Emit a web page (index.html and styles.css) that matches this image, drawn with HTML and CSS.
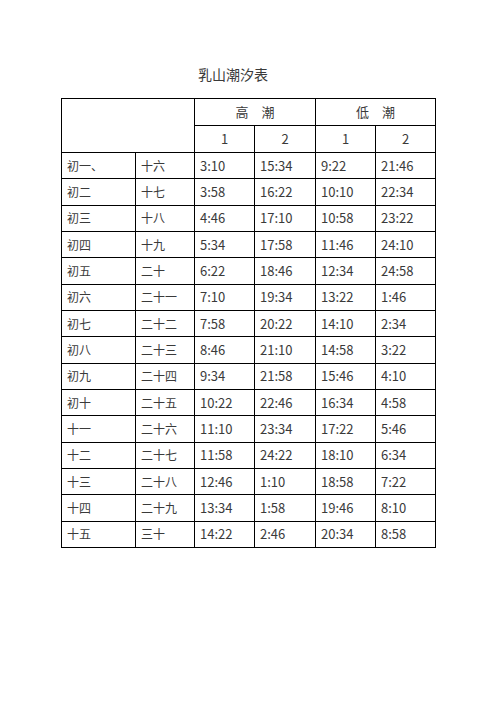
FILE: index.html
```html
<!DOCTYPE html>
<html lang="zh">
<head>
<meta charset="utf-8">
<title>乳山潮汐表</title>
<link rel="stylesheet" href="styles.css">
</head>
<body>
<div class="page">
  <h1 class="title">乳山潮汐表</h1>
  <table class="tide">
    <colgroup>
      <col class="c1"><col class="c2"><col class="c3"><col class="c4"><col class="c5"><col class="c6">
    </colgroup>
    <thead>
      <tr class="hrow">
        <th colspan="2" rowspan="2"></th>
        <th colspan="2">高　潮</th>
        <th colspan="2">低　潮</th>
      </tr>
      <tr class="hrow">
        <th>1</th><th>2</th><th>1</th><th>2</th>
      </tr>
    </thead>
    <tbody>
      <tr><td class="cn">初一、</td><td class="cn">十六</td><td>3:10</td><td>15:34</td><td>9:22</td><td>21:46</td></tr>
      <tr><td class="cn">初二</td><td class="cn">十七</td><td>3:58</td><td>16:22</td><td>10:10</td><td>22:34</td></tr>
      <tr><td class="cn">初三</td><td class="cn">十八</td><td>4:46</td><td>17:10</td><td>10:58</td><td>23:22</td></tr>
      <tr><td class="cn">初四</td><td class="cn">十九</td><td>5:34</td><td>17:58</td><td>11:46</td><td>24:10</td></tr>
      <tr><td class="cn">初五</td><td class="cn">二十</td><td>6:22</td><td>18:46</td><td>12:34</td><td>24:58</td></tr>
      <tr><td class="cn">初六</td><td class="cn">二十一</td><td>7:10</td><td>19:34</td><td>13:22</td><td>1:46</td></tr>
      <tr><td class="cn">初七</td><td class="cn">二十二</td><td>7:58</td><td>20:22</td><td>14:10</td><td>2:34</td></tr>
      <tr><td class="cn">初八</td><td class="cn">二十三</td><td>8:46</td><td>21:10</td><td>14:58</td><td>3:22</td></tr>
      <tr><td class="cn">初九</td><td class="cn">二十四</td><td>9:34</td><td>21:58</td><td>15:46</td><td>4:10</td></tr>
      <tr><td class="cn">初十</td><td class="cn">二十五</td><td>10:22</td><td>22:46</td><td>16:34</td><td>4:58</td></tr>
      <tr><td class="cn">十一</td><td class="cn">二十六</td><td>11:10</td><td>23:34</td><td>17:22</td><td>5:46</td></tr>
      <tr><td class="cn">十二</td><td class="cn">二十七</td><td>11:58</td><td>24:22</td><td>18:10</td><td>6:34</td></tr>
      <tr><td class="cn">十三</td><td class="cn">二十八</td><td>12:46</td><td>1:10</td><td>18:58</td><td>7:22</td></tr>
      <tr><td class="cn">十四</td><td class="cn">二十九</td><td>13:34</td><td>1:58</td><td>19:46</td><td>8:10</td></tr>
      <tr><td class="cn">十五</td><td class="cn">三十</td><td>14:22</td><td>2:46</td><td>20:34</td><td>8:58</td></tr>
    </tbody>
  </table>
</div>
</body>
</html>
```

FILE: styles.css
```css
html, body {
  margin: 0;
  padding: 0;
  background: #ffffff;
}

body {
  font-family: "Noto Sans CJK SC", "Noto Sans", sans-serif;
  color: #3a3a3a;
}

.page {
  padding: 64px 0 0 61px;
}

.title {
  width: 374px;
  box-sizing: border-box;
  padding-right: 30px;
  margin: 0 0 14px 0;
  height: 20px;
  line-height: 20px;
  font-size: 14px;
  font-weight: normal;
  text-align: center;
  color: #3a3a3a;
}

.tide {
  border-collapse: collapse;
  table-layout: fixed;
  width: 374px;
  font-size: 13px;
}

.c1 { width: 74px; }
.c2 { width: 59px; }
.c3 { width: 60px; }
.c4 { width: 61px; }
.c5 { width: 60px; }
.c6 { width: 60px; }

.tide th,
.tide td {
  border: 1px solid #000000;
  padding: 0 0 0 5px;
  line-height: 16px;
  white-space: nowrap;
  overflow: hidden;
}

.tide td.cn {
  font-size: 12px;
}

.tide th {
  font-weight: normal;
  text-align: center;
  padding: 0;
}

.hrow {
  height: 27px;
}

.tide tbody tr {
  height: 26.33px;
}
```
